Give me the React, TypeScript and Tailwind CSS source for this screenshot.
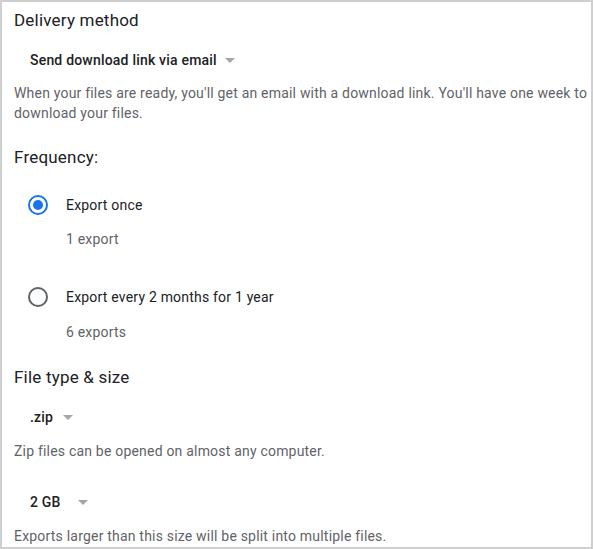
import React from "react";

function Caret({ gap }: { gap: string }) {
  return (
    <span className={`${gap} inline-block w-0 h-0 border-l-[5px] border-r-[5px] border-t-[5px] border-l-transparent border-r-transparent border-t-[#a6a6a6]`} />
  );
}

function Radio({ checked }: { checked: boolean }) {
  return checked ? (
    <span className="flex items-center justify-center w-[20px] h-[20px] rounded-full border-2 border-[#1a73e8]">
      <span className="block w-[10px] h-[10px] rounded-full bg-[#1a73e8]" />
    </span>
  ) : (
    <span className="block w-[20px] h-[20px] rounded-full border-2 border-[#5f6368]" />
  );
}

export default function App() {
  return (
    <div
      className="w-[593px] h-[549px] border-2 border-[#cfcfcf] bg-white overflow-hidden tracking-[0.2px]"
      style={{ fontFamily: "Roboto, 'Liberation Sans', sans-serif" }}
    >
      <div className="pl-[12px] pt-[6px]">
        <h2 className="text-[17px] leading-[24px] text-[#202124]">Delivery method</h2>
        <div className="mt-[18px] ml-[16px] flex items-center h-[20px] text-[14px] font-medium text-[#202124]">
          Send download link via email
          <Caret gap="ml-[8px]" />
        </div>
        <p className="mt-[13px] text-[14px] leading-[20px] text-[#5f6368] pr-[2px]">
          When your files are ready, you'll get an email with a download link. You'll have one week to download your files.
        </p>

        <h2 className="mt-[22px] text-[17px] leading-[24px] text-[#202124]">Frequency:</h2>

        <div className="mt-[26px] flex items-center h-[20px]">
          <span className="ml-[14px] mr-[18px]"><Radio checked /></span>
          <span className="text-[14px] text-[#202124]">Export once</span>
        </div>
        <div className="mt-[14px] ml-[52px] h-[20px] text-[14px] leading-[20px] text-[#5f6368]">1 export</div>

        <div className="mt-[38px] flex items-center h-[20px]">
          <span className="ml-[14px] mr-[18px]"><Radio checked={false} /></span>
          <span className="text-[14px] text-[#202124]">Export every 2 months for 1 year</span>
        </div>
        <div className="mt-[15px] ml-[52px] h-[20px] text-[14px] leading-[20px] text-[#5f6368]">6 exports</div>

        <h2 className="mt-[23px] text-[17px] leading-[24px] text-[#202124]">File type &amp; size</h2>

        <div className="mt-[18px] ml-[16px] flex items-center h-[20px] text-[14px] font-medium text-[#202124]">
          .zip
          <Caret gap="ml-[10px]" />
        </div>
        <p className="mt-[14px] text-[14px] leading-[20px] text-[#5f6368]">Zip files can be opened on almost any computer.</p>

        <div className="mt-[31px] ml-[16px] flex items-center h-[20px] text-[14px] font-medium text-[#202124]">
          2 GB
          <Caret gap="ml-[17px]" />
        </div>
        <p className="mt-[14px] text-[14px] leading-[20px] text-[#5f6368]">Exports larger than this size will be split into multiple files.</p>
      </div>
    </div>
  );
}
